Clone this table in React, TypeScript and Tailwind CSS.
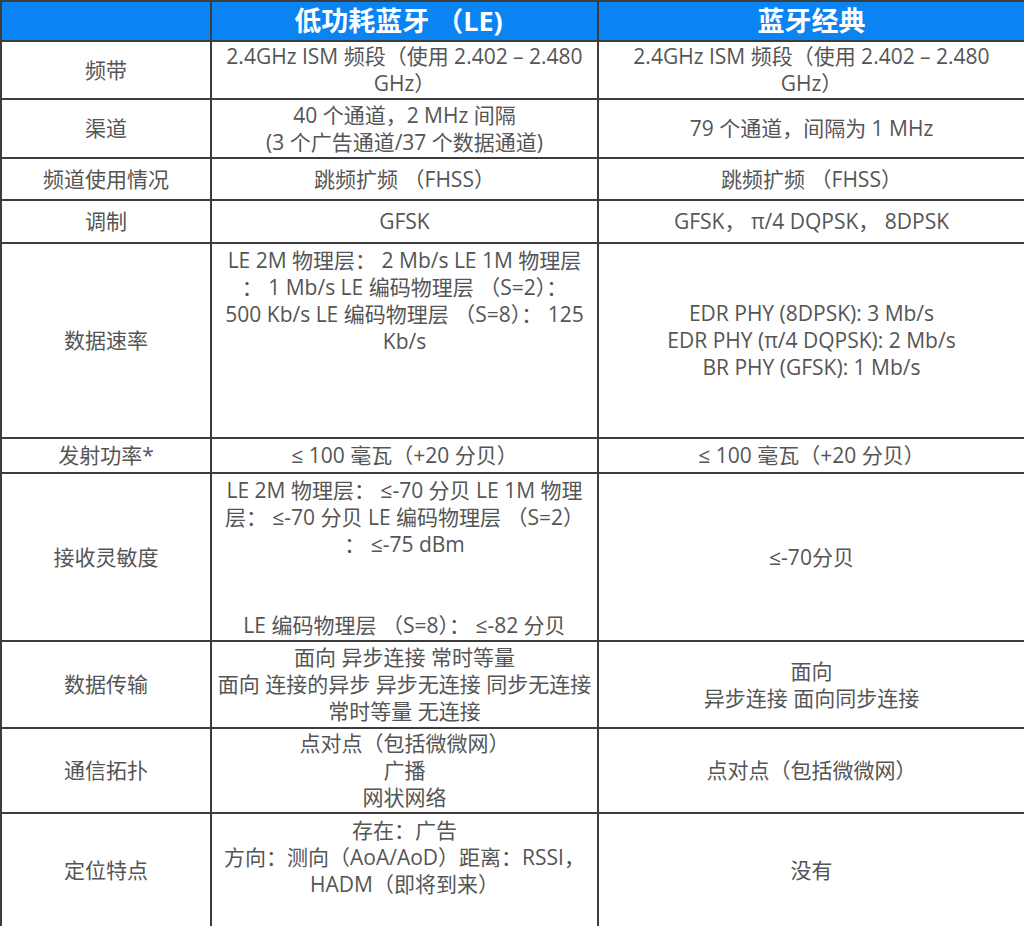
const rows: {
  label: string;
  le: string[];
  classic: string[];
  h: string;
  top?: boolean;
}[] = [
  {
    label: '频带',
    le: ['2.4GHz ISM 频段（使用 2.402 – 2.480', 'GHz）'],
    classic: ['2.4GHz ISM 频段（使用 2.402 – 2.480', 'GHz）'],
    h: 'h-[58px]',
  },
  {
    label: '渠道',
    le: ['40 个通道，2 MHz 间隔', '(3 个广告通道/37 个数据通道)'],
    classic: ['79 个通道，间隔为 1 MHz'],
    h: 'h-[59px]',
  },
  {
    label: '频道使用情况',
    le: ['跳频扩频 （FHSS）'],
    classic: ['跳频扩频 （FHSS）'],
    h: 'h-[42px]',
  },
  {
    label: '调制',
    le: ['GFSK'],
    classic: ['GFSK， π/4 DQPSK， 8DPSK'],
    h: 'h-[43px]',
  },
  {
    label: '数据速率',
    le: [
      'LE 2M 物理层： 2 Mb/s LE 1M 物理层',
      '： 1 Mb/s LE 编码物理层 （S=2）：',
      '500 Kb/s LE 编码物理层 （S=8）： 125',
      'Kb/s',
    ],
    classic: ['EDR PHY (8DPSK): 3 Mb/s', 'EDR PHY (π/4 DQPSK): 2 Mb/s', 'BR PHY (GFSK): 1 Mb/s'],
    h: 'h-[195px]',
    top: true,
  },
  {
    label: '发射功率*',
    le: ['≤ 100 毫瓦（+20 分贝）'],
    classic: ['≤ 100 毫瓦（+20 分贝）'],
    h: 'h-[35px]',
  },
  {
    label: '接收灵敏度',
    le: [
      'LE 2M 物理层： ≤-70 分贝 LE 1M 物理',
      '层： ≤-70 分贝 LE 编码物理层 （S=2）',
      '： ≤-75 dBm',
      '\u00a0',
      '\u00a0',
      'LE 编码物理层 （S=8）： ≤-82 分贝',
    ],
    classic: ['≤-70分贝'],
    h: 'h-[168px]',
    top: true,
  },
  {
    label: '数据传输',
    le: ['面向 异步连接 常时等量', '面向 连接的异步 异步无连接 同步无连接', '常时等量 无连接'],
    classic: ['面向', '异步连接 面向同步连接'],
    h: 'h-[87px]',
  },
  {
    label: '通信拓扑',
    le: ['点对点（包括微微网）', '广播', '网状网络'],
    classic: ['点对点（包括微微网）'],
    h: 'h-[85px]',
  },
  {
    label: '定位特点',
    le: ['存在：广告', '方向：测向（AoA/AoD）距离：RSSI，', 'HADM（即将到来）'],
    classic: ['没有'],
    h: 'h-[114px]',
    top: true,
  },
];

function Lines({ lines }: { lines: string[] }) {
  return (
    <>
      {lines.map((l, i) => (
        <div key={i} className="whitespace-nowrap">
          {l}
        </div>
      ))}
    </>
  );
}

export default function App() {
  return (
    <div className="w-[1024px] h-[926px] bg-white overflow-hidden font-['Open_Sans','DejaVu_Sans','Noto_Sans_CJK_SC',sans-serif]">
      <table className="w-[1024px] table-fixed border-collapse text-center text-[21px] leading-[27px] text-[#555555]">
        <colgroup>
          <col className="w-[210px]" />
          <col className="w-[387px]" />
          <col className="w-[427px]" />
        </colgroup>
        <thead>
          <tr className="h-[40px] bg-[#0b84f3] text-white text-[27px] leading-[32px] font-bold">
            <th className="border-2 border-[#3c3c3c]"></th>
            <th className="border-2 border-[#3c3c3c] pr-3">低功耗蓝牙 （LE)</th>
            <th className="border-2 border-[#3c3c3c]">蓝牙经典</th>
          </tr>
        </thead>
        <tbody>
          {rows.map((r) => (
            <tr key={r.label} className={r.h}>
              <td className="border-2 border-[#3c3c3c] align-middle px-1">{r.label}</td>
              <td
                className={`border-2 border-[#3c3c3c] px-1 ${
                  r.top ? 'align-top pt-[3px]' : 'align-middle'
                }`}
              >
                <Lines lines={r.le} />
              </td>
              <td className="border-2 border-[#3c3c3c] align-middle px-1">
                <Lines lines={r.classic} />
              </td>
            </tr>
          ))}
        </tbody>
      </table>
    </div>
  );
}
